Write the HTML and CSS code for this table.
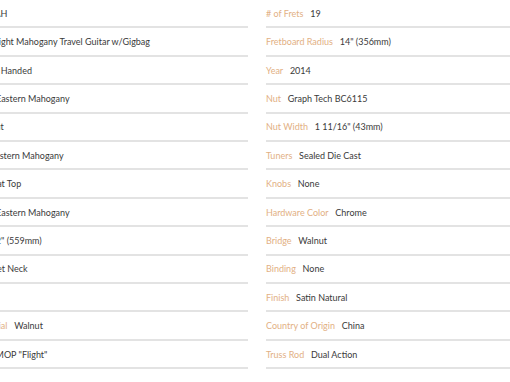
FILE: index.html
```html
<!DOCTYPE html>
<html lang="en">
<head>
<meta charset="utf-8">
<title>Specifications</title>
<link rel="stylesheet" href="styles.css">
</head>
<body>
<div class="specs">
  <ul class="col">
    <li class="row"><span class="k">Model</span><span class="v">FTG-MAH</span></li>
    <li class="row"><span class="k">Model Name</span><span class="v">Flight Mahogany Travel Guitar w/Gigbag</span></li>
    <li class="row"><span class="k">Dexterity</span><span class="v">Right Handed</span></li>
    <li class="row"><span class="k">Body Material</span><span class="v">Eastern Mahogany</span></li>
    <li class="row"><span class="k">Cutaway</span><span class="v">No Cut</span></li>
    <li class="row"><span class="k">Top Material</span><span class="v">Eastern Mahogany</span></li>
    <li class="row"><span class="k">Top Contour</span><span class="v">Flat Top</span></li>
    <li class="row"><span class="k">Neck Material</span><span class="v">Eastern Mahogany</span></li>
    <li class="row"><span class="k">Scale Length</span><span class="v">22" (559mm)</span></li>
    <li class="row"><span class="k">Construction</span><span class="v">Set Neck</span></li>
    <li class="row"><span class="k">Inlays</span><span class="v">Dots</span></li>
    <li class="row"><span class="k">Fretboard Material</span><span class="v">Walnut</span></li>
    <li class="row"><span class="k">Peghead Inlay</span><span class="v">MOP "Flight"</span></li>
  </ul>
  <ul class="col">
    <li class="row"><span class="k"># of Frets</span><span class="v">19</span></li>
    <li class="row"><span class="k">Fretboard Radius</span><span class="v">14" (356mm)</span></li>
    <li class="row"><span class="k">Year</span><span class="v">2014</span></li>
    <li class="row"><span class="k">Nut</span><span class="v">Graph Tech BC6115</span></li>
    <li class="row"><span class="k">Nut Width</span><span class="v">1 11/16" (43mm)</span></li>
    <li class="row"><span class="k">Tuners</span><span class="v">Sealed Die Cast</span></li>
    <li class="row"><span class="k">Knobs</span><span class="v">None</span></li>
    <li class="row"><span class="k">Hardware Color</span><span class="v">Chrome</span></li>
    <li class="row"><span class="k">Bridge</span><span class="v">Walnut</span></li>
    <li class="row"><span class="k">Binding</span><span class="v">None</span></li>
    <li class="row"><span class="k">Finish</span><span class="v">Satin Natural</span></li>
    <li class="row"><span class="k">Country of Origin</span><span class="v">China</span></li>
    <li class="row"><span class="k">Truss Rod</span><span class="v">Dual Action</span></li>
  </ul>
</div>
</body>
</html>
```
FILE: styles.css
```css
html, body {
  margin: 0;
  padding: 0;
  background: #ffffff;
  overflow: hidden;
}
body {
  width: 510px;
  height: 382px;
}
.specs {
  display: grid;
  grid-template-columns: 314px 314px;
  column-gap: 18px;
  margin: 0 0 0 -66px;
  font-family: Lato, "Noto Sans", sans-serif;
  font-size: 9px;
}
.col {
  list-style: none;
  margin: 0;
  padding: 0;
}
.row {
  height: 28.42px;
  box-sizing: border-box;
  border-bottom: 2px solid #e3e3e3;
  display: flex;
  align-items: center;
  white-space: nowrap;
}
.k {
  color: #e2b084;
  margin-right: 0.75em;
}
.v {
  color: #3a3a3a;
}
```
